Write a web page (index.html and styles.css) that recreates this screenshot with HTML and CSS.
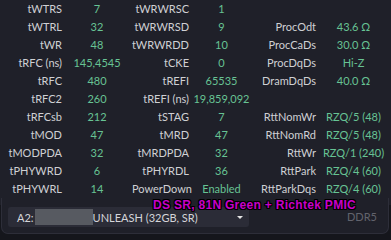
FILE: index.html
```html
<!DOCTYPE html>
<html lang="en">
<head>
    <meta charset="UTF-8">
    <title>Timings</title>
    <link rel="stylesheet" href="styles.css">
</head>
<body>
    <div class="timings">
        <span class="lbl">tWTRS</span><span class="val">7</span>
        <span class="lbl">tWRWRSC</span><span class="val">1</span>
        <span class="lbl"></span><span class="val"></span>

        <span class="lbl">tWTRL</span><span class="val">32</span>
        <span class="lbl">tWRWRSD</span><span class="val">9</span>
        <span class="lbl">ProcOdt</span><span class="val">43.6 Ω</span>

        <span class="lbl">tWR</span><span class="val">48</span>
        <span class="lbl">tWRWRDD</span><span class="val">10</span>
        <span class="lbl">ProcCaDs</span><span class="val">30.0 Ω</span>

        <span class="lbl">tRFC (ns)</span><span class="val">145,4545</span>
        <span class="lbl">tCKE</span><span class="val">0</span>
        <span class="lbl">ProcDqDs</span><span class="val">Hi-Z</span>

        <span class="lbl">tRFC</span><span class="val">480</span>
        <span class="lbl">tREFI</span><span class="val">65535</span>
        <span class="lbl">DramDqDs</span><span class="val">40.0 Ω</span>

        <span class="lbl">tRFC2</span><span class="val">260</span>
        <span class="lbl">tREFI (ns)</span><span class="val">19,859,092</span>
        <span class="lbl"></span><span class="val"></span>

        <span class="lbl">tRFCsb</span><span class="val">212</span>
        <span class="lbl">tSTAG</span><span class="val">7</span>
        <span class="lbl">RttNomWr</span><span class="val">RZQ/5 (48)</span>

        <span class="lbl">tMOD</span><span class="val">47</span>
        <span class="lbl">tMRD</span><span class="val">47</span>
        <span class="lbl">RttNomRd</span><span class="val">RZQ/5 (48)</span>

        <span class="lbl">tMODPDA</span><span class="val">32</span>
        <span class="lbl">tMRDPDA</span><span class="val">32</span>
        <span class="lbl">RttWr</span><span class="val">RZQ/1 (240)</span>

        <span class="lbl">tPHYWRD</span><span class="val">6</span>
        <span class="lbl">tPHYRDL</span><span class="val">36</span>
        <span class="lbl">RttPark</span><span class="val">RZQ/4 (60)</span>

        <span class="lbl">tPHYWRL</span><span class="val">14</span>
        <span class="lbl">PowerDown</span><span class="val">Enabled</span>
        <span class="lbl">RttParkDqs</span><span class="val">RZQ/4 (60)</span>
    </div>

    <div class="footer">
        <div class="module-select">
            <span class="slot">A2:</span>
            <span class="censor"></span>
            <span class="part">UNLEASH (32GB, SR)</span>
            <span class="arrow"></span>
        </div>
        <span class="mem-type">DDR5</span>
        <div class="note">DS SR, 81N Green + Richtek PMIC</div>
    </div>
</body>
</html>
```

FILE: styles.css
```css
body, html {
    margin: 0;
    padding: 0;
    width: 391px;
    height: 240px;
    overflow: hidden;
    background-color: #15161c;
}
body {
    background: linear-gradient(#1f2029, #1f2029) top / 100% 205px no-repeat, #15161c;
    font-family: Lato, sans-serif;
    font-size: 11px;
}
.timings {
    display: grid;
    grid-template-columns: 62px 70px 57px 65px 62px 75px;
    grid-auto-rows: 18px;
    height: 198px;
}
.lbl {
    color: #cfd0d4;
    text-align: right;
    line-height: 18px;
    white-space: nowrap;
}
.val {
    color: #67c394;
    text-align: center;
    line-height: 18px;
    white-space: nowrap;
}

.footer {
    position: relative;
    height: 26px;
    margin: 0 2px 0 1px;
    padding: 9px 6px 0 6px;
    background-color: #1f2029;
    border: 1px solid #2d2e39;
    border-top: none;
    border-radius: 0 0 7px 7px;
    display: flex;
    align-items: flex-start;
}
.module-select {
    width: 241px;
    height: 20px;
    background-color: #2b2c37;
    border-radius: 3px;
    display: flex;
    align-items: center;
    color: #d4d5d9;
    padding-left: 9px;
    box-sizing: border-box;
}
.censor {
    width: 58px;
    height: 16px;
    margin-left: 1px;
    background-color: #575a61;
}
.arrow {
    margin-left: auto;
    margin-right: 6px;
    border-left: 3px solid transparent;
    border-right: 3px solid transparent;
    border-top: 3px solid #e6e6e6;
}
.mem-type {
    margin-left: auto;
    margin-right: 5px;
    color: #62636c;
    line-height: 20px;
}
.note {
    position: absolute;
    left: 151px;
    top: 0;
    font-family: "Liberation Sans", sans-serif;
    font-weight: bold;
    font-size: 12px;
    letter-spacing: 0.3px;
    color: #c800c8;
    text-shadow: 1px 0 0 #000, -1px 0 0 #000, 0 1px 0 #000, 0 -1px 0 #000,
        1px 1px 0 #000, -1px -1px 0 #000, 1px -1px 0 #000, -1px 1px 0 #000;
}
```
